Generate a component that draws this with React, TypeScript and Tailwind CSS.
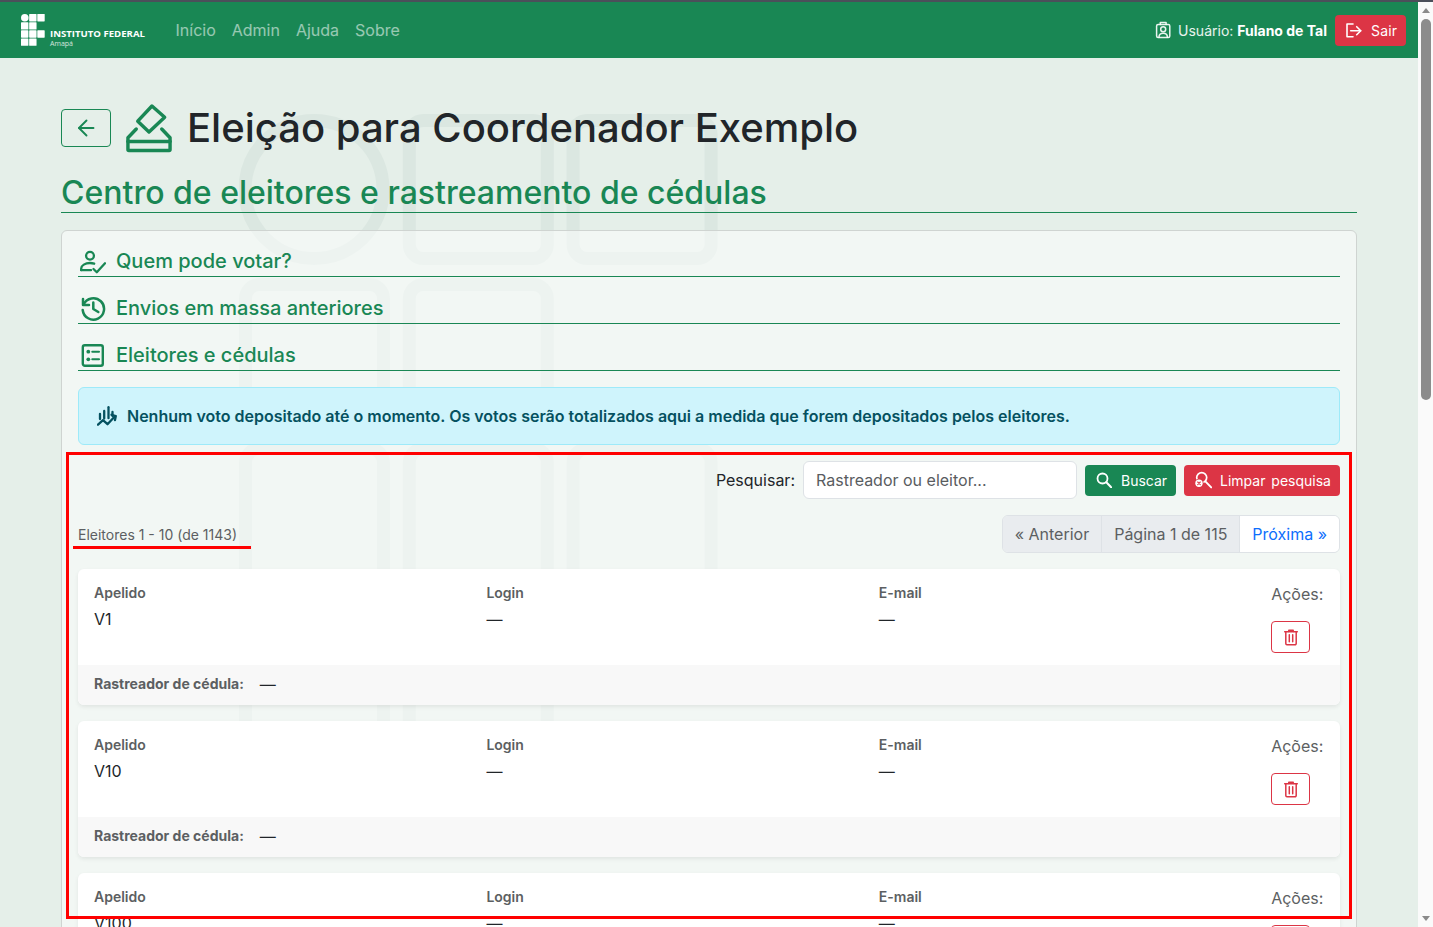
import React from "react";

function IfLogo() {
  const cells: [number, number][] = [
    [1, 0], [2, 0], [0, 1], [1, 1], [0, 2], [1, 2], [2, 2], [0, 3], [1, 3],
  ];
  return (
    <svg width="25" height="33" viewBox="0 0 25 33" className="shrink-0">
      <circle cx="3.8" cy="3.8" r="3.8" fill="#fff" />
      {cells.map(([c, r]) => (
        <rect key={`${c}-${r}`} x={c * 8.15} y={r * 8.15} width="7.4" height="7.4" rx="0.6" fill="#fff" />
      ))}
    </svg>
  );
}

function Watermark() {
  const cells: [number, number][] = [
    [1, 0], [2, 0], [0, 1], [1, 1], [0, 2], [1, 2], [2, 2], [0, 3], [1, 3],
  ];
  return (
    <svg
      width="480"
      height="650"
      viewBox="0 0 480 650"
      className="absolute left-[239px] top-[114px] pointer-events-none"
    >
      <circle cx="75" cy="75.5" r="69" fill="none" stroke="#dbe7e1" strokeWidth="13" />
      {cells.map(([c, r]) => (
        <rect
          key={`${c}-${r}`}
          x={c * 163.8 + 6.5}
          y={r * 164 + 6.5}
          width="138"
          height="138"
          rx="14"
          fill="none"
          stroke="#dbe7e1"
          strokeWidth="13"
        />
      ))}
    </svg>
  );
}

function BackArrow() {
  return (
    <svg width="18" height="18" viewBox="0 0 18 18" fill="none" stroke="#198754" strokeWidth="1.9" strokeLinecap="round" strokeLinejoin="round">
      <path d="M16.5 9H2" />
      <path d="M9.5 1.5 2 9l7.5 7.5" />
    </svg>
  );
}

function BallotIcon() {
  return (
    <svg width="48" height="50" viewBox="0 0 49 50" fill="none" stroke="#198754" strokeWidth="3.5" strokeLinejoin="round" strokeLinecap="round" className="shrink-0">
      <path d="M27.5 2.5 40.5 14 24.5 29 13 18Z" />
      <path d="M11.5 26 3 35v12a1 1 0 0 0 1 1h41a1 1 0 0 0 1-1V35l-8.5-9" />
      <path d="M3 38.7h43" />
    </svg>
  );
}

function UserCheckIcon() {
  return (
    <svg width="28" height="28" viewBox="0 0 28 28" fill="none" stroke="#198754" strokeWidth="2.3" strokeLinecap="round" strokeLinejoin="round" className="shrink-0">
      <circle cx="12" cy="7.7" r="3.9" />
      <path d="M3.2 22.2v-1.7c0-3 4-5.5 8.8-5.5 1.6 0 3 .3 4.2.7" />
      <path d="M3.2 22.2H13" />
      <path d="m15.5 21 3.3 3.3 8.2-9" />
    </svg>
  );
}

function HistoryIcon() {
  return (
    <svg width="28" height="28" viewBox="0 0 28 28" fill="none" stroke="#198754" strokeWidth="2.5" strokeLinecap="round" strokeLinejoin="round" className="shrink-0">
      <path d="M5.6 9.5A10.7 10.7 0 1 1 4.7 15" />
      <path d="M5 4v6h6" />
      <path d="M15.3 7.5V14l5 3" />
    </svg>
  );
}

function ListIcon() {
  return (
    <svg width="28" height="28" viewBox="0 0 28 28" fill="none" stroke="#198754" strokeWidth="2.4" strokeLinecap="round" strokeLinejoin="round" className="shrink-0">
      <rect x="4.8" y="3.3" width="20" height="20.4" rx="2" />
      <circle cx="10.3" cy="9.7" r="1.9" fill="#198754" stroke="none" />
      <circle cx="10.3" cy="17.3" r="1.9" fill="#198754" stroke="none" />
      <path d="M14.3 9.7H21M14.3 17.3H21" strokeWidth="2.1" />
    </svg>
  );
}

function ChartIcon() {
  return (
    <svg width="20" height="20" viewBox="0 0 20 20" fill="none" stroke="#055160" strokeWidth="2.3" strokeLinecap="round" strokeLinejoin="round" className="shrink-0">
      <path d="M3 8v5" />
      <path d="M7.2 5v7.5" />
      <path d="M11.5 1.2v11" />
      <path d="M15.5 6v4" />
      <path d="m1 18.7 5-4.5 4.5 4 7-7.5" />
      <path d="m14.5 8.8 4.3 1.2-.8 4" />
    </svg>
  );
}

function SearchIcon() {
  return (
    <svg width="16" height="16" viewBox="0 0 16 16" fill="none" stroke="#fff" strokeWidth="1.8" strokeLinecap="round" className="shrink-0">
      <circle cx="6.5" cy="6.5" r="5" />
      <path d="m10.3 10.3 4.9 4.9" strokeWidth="2.1" />
    </svg>
  );
}

function ClearSearchIcon() {
  return (
    <svg width="18" height="18" viewBox="0 0 18 18" fill="none" className="shrink-0">
      <circle cx="7.7" cy="6.6" r="5" stroke="#fff" strokeWidth="1.7" />
      <path d="m11.6 10.6 5.6 5.8" stroke="#fff" strokeWidth="1.9" strokeLinecap="round" />
      <circle cx="5" cy="12.3" r="4.6" fill="#dc3545" />
      <circle cx="5" cy="12.3" r="3.7" fill="#fff" />
      <path d="m3.7 11 2.6 2.6M6.3 11l-2.6 2.6" stroke="#dc3545" strokeWidth="1.1" strokeLinecap="round" />
    </svg>
  );
}

function TrashIcon() {
  return (
    <svg width="16" height="17" viewBox="0 0 16 17" fill="none" stroke="#dc3545" strokeWidth="1.5" strokeLinejoin="round" strokeLinecap="round">
      <path d="M1.7 2.7h12.6" />
      <path d="M5.8 2.5V1.2h4.4v1.3" />
      <path d="M2.8 3v11.5a1.2 1.2 0 0 0 1.2 1.2h8a1.2 1.2 0 0 0 1.2-1.2V3" />
      <path d="M6.3 5.8v7M9.7 5.8v7" />
    </svg>
  );
}

function BadgeIcon() {
  return (
    <svg width="17" height="18" viewBox="0 0 17 18" fill="none" stroke="#ffffff" strokeOpacity="0.9" strokeWidth="1.5" strokeLinecap="round" strokeLinejoin="round" className="shrink-0">
      <rect x="1.6" y="3.6" width="13.2" height="13" rx="1.5" />
      <path d="M5.3 3.6V1.6h5.8v2" />
      <circle cx="8.2" cy="8.3" r="2.5" />
      <path d="M4 16.2c0-2.6 1.9-3.9 4.2-3.9s4.2 1.3 4.2 3.9" />
    </svg>
  );
}

function LogoutIcon() {
  return (
    <svg width="18" height="17" viewBox="0 0 18 17" fill="none" stroke="#fff" strokeWidth="1.6" strokeLinecap="round" strokeLinejoin="round" className="shrink-0">
      <path d="M8 2H2v12.7h6" />
      <path d="M5.7 8.7h10" />
      <path d="m11.7 4.7 4 4-4 4" />
    </svg>
  );
}

function Section({ icon, title }: { icon: React.ReactNode; title: string }) {
  return (
    <div className="flex h-[30px] items-center border-b border-[#198754] text-[20px] font-medium leading-6 text-[#198754]">
      <span className="flex w-[38px] shrink-0 items-center">{icon}</span>
      <span className="mt-[-2px]">{title}</span>
    </div>
  );
}

function Field({ label, value }: { label: string; value: string }) {
  return (
    <div className="w-[392.4px] shrink-0">
      <div className="text-[14px] font-semibold leading-[21px] text-[#5c5f62]">{label}</div>
      <div className="mt-[4px] text-[16px] leading-6 text-[#212529]">{value}</div>
    </div>
  );
}

function VoterCard({ name }: { name: string }) {
  return (
    <div className="shrink-0 overflow-hidden rounded-md bg-white shadow-[0_2px_4px_rgba(0,0,0,0.075)]">
      <div className="flex h-24 px-4 pt-[13px]">
        <Field label="Apelido" value={name} />
        <Field label="Login" value="—" />
        <Field label="E-mail" value="—" />
        <div className="flex flex-1 flex-col items-start">
          <div className="text-[16px] leading-6 text-[#5c5f62]">Ações:</div>
          <div className="mt-[15px] flex h-8 w-[39px] items-center justify-center rounded border border-[#dc3545]">
            <TrashIcon />
          </div>
        </div>
      </div>
      <div className="flex h-10 items-center bg-[#f8f8f8] px-4 pb-[3px] text-[14px] font-bold text-[#5c5f62]">
        <span>Rastreador de cédula:</span>
        <span className="ml-4 text-[16px] font-normal text-[#212529]">—</span>
      </div>
    </div>
  );
}

export default function App() {
  return (
    <div className="flex h-screen w-full overflow-hidden bg-[#e5efe9] font-['Inter',sans-serif] text-[#212529]">
      <main className="relative flex h-full min-w-0 flex-1 flex-col overflow-hidden">
        <Watermark />
        <header className="relative flex h-[58px] shrink-0 items-center justify-between border-t-2 border-[#4b4f5a] bg-[#198754] pl-[21px] pr-3">
          <div className="flex items-center">
            <div className="flex w-[125px] items-end">
              <IfLogo />
              <div className="ml-[4px] flex flex-col font-['Open_Sans',sans-serif] text-white">
                <span className="whitespace-nowrap text-[9.6px] font-bold leading-[10px]">INSTITUTO FEDERAL</span>
                <span className="mt-[1px] text-[7px] leading-[7px] text-white/80">Amapá</span>
              </div>
            </div>
            <nav className="ml-[29.5px] flex gap-4 text-[16px] text-white/55">
              <span>Início</span>
              <span>Admin</span>
              <span>Ajuda</span>
              <span>Sobre</span>
            </nav>
          </div>
          <div className="flex items-center">
            <BadgeIcon />
            <span className="ml-[6px] text-[14px] text-white/90">
              Usuário: <strong className="font-bold text-white">Fulano de Tal</strong>
            </span>
            <div className="ml-2 flex h-[31px] w-[71px] items-center justify-start gap-[8px] rounded bg-[#dc3545] pl-[10px] text-[14px] tracking-[0.2px] text-white">
              <LogoutIcon />
              <span>Sair</span>
            </div>
          </div>
        </header>

        <div className="relative mx-auto w-[1320px] shrink-0 px-3">
          <div className="mt-[45px] flex h-[50px] items-center">
            <div className="flex h-[38px] w-[50px] items-center justify-center rounded border border-[#198754]">
              <BackArrow />
            </div>
            <div className="ml-[14px]"><BallotIcon /></div>
            <h1 className="ml-[14px] text-[40px] font-medium leading-[48px] text-[#212529]">Eleição para Coordenador Exemplo</h1>
          </div>
          <h2 className="mt-[20px] h-10 border-b border-[#198754] text-[32px] font-medium leading-[39px] text-[#198754]">
            Centro de eleitores e rastreamento de cédulas
          </h2>
          <div className="mt-[17px] flex h-[720px] flex-col rounded-md border border-[#cfd4d1] bg-white/50 p-4">
            <div className="flex flex-col gap-[17px]">
              <Section icon={<UserCheckIcon />} title="Quem pode votar?" />
              <Section icon={<HistoryIcon />} title="Envios em massa anteriores" />
              <Section icon={<ListIcon />} title="Eleitores e cédulas" />
            </div>
            <div className="mt-4 flex h-[58px] shrink-0 items-center gap-[10px] rounded-md border border-[#9eeaf9] bg-[#cff4fc] pl-[18px] text-[16px] font-semibold text-[#055160]">
              <ChartIcon />
              <span>Nenhum voto depositado até o momento. Os votos serão totalizados aqui a medida que forem depositados pelos eleitores.</span>
            </div>
            <div className="mt-4 flex h-[38px] shrink-0 items-center justify-end">
              <span className="text-[16px] text-[#212529]">Pesquisar:</span>
              <div className="ml-2 flex h-[38px] w-[274px] items-center rounded-md border border-[#dee2e6] bg-white px-3 text-[16px] text-[#595c5f]">
                Rastreador ou eleitor...
              </div>
              <div className="ml-2 flex h-[31px] w-[91px] items-center gap-[9px] rounded bg-[#198754] pl-[11px] text-[14px] text-white">
                <SearchIcon />
                <span>Buscar</span>
              </div>
              <div className="ml-2 flex h-[31px] w-[156px] items-center gap-[8px] rounded bg-[#dc3545] pl-[10px] text-[14px] text-white">
                <ClearSearchIcon />
                <span className="[word-spacing:2px]">Limpar pesquisa</span>
              </div>
            </div>
            <div className="mt-4 flex h-[38px] shrink-0 items-center justify-between">
              <span className="text-[14px] text-[#5c5f62]">Eleitores 1 - 10 (de 1143)</span>
              <div className="flex h-[38px] overflow-hidden rounded-md border border-[#dee2e6] text-[16px]">
                <span className="flex items-center border-r border-[#dee2e6] bg-[#e9ecef] px-3 text-[#5c5f62]">« Anterior</span>
                <span className="flex items-center border-r border-[#dee2e6] bg-[#e9ecef] px-3 text-[#5c5f62]">Página 1 de 115</span>
                <span className="flex items-center bg-white px-3 text-[#0d6efd]">Próxima »</span>
              </div>
            </div>
            <div className="mt-4 flex flex-col gap-4">
              <VoterCard name="V1" />
              <VoterCard name="V10" />
              <VoterCard name="V100" />
            </div>
          </div>
        </div>

        <div className="absolute left-[66px] top-[452px] h-[467px] w-[1286px] border-[3.5px] border-[#ff0000]" />
        <div className="absolute left-[73px] top-[545.5px] h-[3.5px] w-[178px] bg-[#ff0000]" />
      </main>

      <aside className="relative flex h-full w-[15px] shrink-0 flex-col items-center border-t-2 border-[#4b4f5a] bg-[#fafafa]">
        <span className="mt-[6px] h-0 w-0 border-x-[4.5px] border-b-[5px] border-x-transparent border-b-[#8a8a8a]" />
        <span className="mt-[6px] h-[381px] w-[10px] rounded-full bg-[#8c8c8c]" />
        <span className="mt-auto mb-[6px] h-0 w-0 border-x-[4.5px] border-t-[5px] border-x-transparent border-t-[#8a8a8a]" />
      </aside>
    </div>
  );
}
